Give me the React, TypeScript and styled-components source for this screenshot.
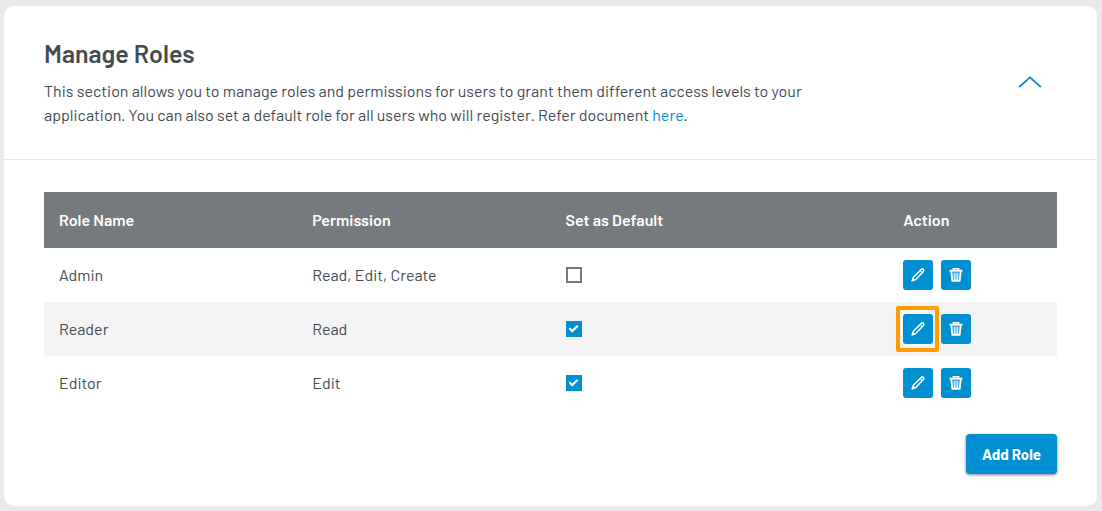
import React, { useState } from "react";
import styled, { createGlobalStyle } from "styled-components";

const GlobalStyle = createGlobalStyle`
  *, *::before, *::after { box-sizing: border-box; }
  body {
    margin: 0;
    background: #e7e9eb;
    color: #434b51;
    font-family: Barlow, Roboto, "Liberation Sans", sans-serif;
    font-size: 16px;
    line-height: 24px;
  }
`;

const Page = styled.main`
  padding: 6px 5px 5px 4px;
`;

const Card = styled.section`
  background: #fff;
  border-radius: 10px;
`;

const CardHeader = styled.header`
  display: flex;
  align-items: center;
  justify-content: space-between;
  gap: 24px;
  padding: 31px 55px 32px 40px;
  border-bottom: 1px solid #e7e9eb;
`;

const Intro = styled.div`
  max-width: 800px;
`;

const Title = styled.h2`
  margin: 0 0 10px;
  font-size: 25px;
  line-height: 32px;
  font-weight: 600;
`;

const Description = styled.p`
  margin: 0;
`;

const DocLink = styled.a`
  color: #008fd1;
  text-decoration: none;
`;

const CollapseButton = styled.button`
  display: flex;
  padding: 0;
  border: 0;
  background: none;
  color: #008fd1;
  cursor: pointer;
`;

const CardBody = styled.div`
  padding: 32px 40px;
`;

const RolesTable = styled.table`
  width: 100%;
  table-layout: fixed;
  border-collapse: collapse;
  text-align: left;
`;

const HeadCell = styled.th<{ $width: string }>`
  width: ${(p) => p.$width};
  height: 56px;
  padding: 0 15px;
  background: #757a7e;
  color: #fff;
  font-weight: 600;
`;

const Row = styled.tr`
  &:nth-child(even) { background: #f4f4f4; }
`;

const Cell = styled.td`
  height: 54px;
  padding: 0 15px;
`;

const Checkbox = styled.input`
  appearance: none;
  display: grid;
  place-items: center;
  width: 16px;
  height: 16px;
  margin: 0;
  border: 2px solid #757a7e;
  background: #fff;
  cursor: pointer;
  &:checked {
    border-color: #008fd1;
    background: #008fd1;
  }
  &:checked::before {
    content: "";
    width: 10px;
    height: 8px;
    background: #fff;
    clip-path: polygon(0 48%, 16% 30%, 37% 56%, 84% 0, 100% 18%, 37% 96%);
  }
`;

const Actions = styled.div`
  display: flex;
  gap: 8px;
`;

const IconButton = styled.button<{ $highlighted?: boolean }>`
  display: flex;
  align-items: center;
  justify-content: center;
  width: 30px;
  height: 30px;
  padding: 0;
  border: 0;
  border-radius: 3px;
  background: #008fd1;
  color: #fff;
  cursor: pointer;
  position: relative;
  &::after {
    content: "";
    display: ${(p) => (p.$highlighted ? "block" : "none")};
    position: absolute;
    inset: -8px -6px -8px -7px;
    border: 4px solid #ff9c00;
    border-radius: 2px;
    pointer-events: none;
  }
`;

const Footer = styled.div`
  display: flex;
  justify-content: flex-end;
  padding-top: 24px;
`;

const PrimaryButton = styled.button`
  height: 40px;
  padding: 0 16px;
  border: 0;
  border-radius: 4px;
  background: #008fd1;
  box-shadow: 0 1px 3px rgba(0, 0, 0, 0.5);
  color: #fff;
  font: inherit;
  font-size: 15px;
  font-weight: 700;
  white-space: nowrap;
  cursor: pointer;
`;

const ChevronIcon = ({ open }: { open: boolean }) => (
  <svg width="24" height="12" viewBox="0 0 24 12" fill="none" stroke="currentColor" strokeWidth="1.7" aria-hidden="true">
    <path d={open ? "M1.2 11 12 1.4 22.8 11" : "M1.2 1 12 10.6 22.8 1"} />
  </svg>
);

const PencilIcon = () => (
  <svg width="16" height="16" viewBox="0 0 16 16" fill="none" stroke="currentColor" strokeWidth="1.5" strokeLinejoin="round" aria-hidden="true">
    <path d="M2.2 13.8 3.4 10.3 11.3 2.4q1.1-1 2.1 0 1 1 0 2.2L5.7 12.5Z" />
    <path d="m10.3 3.6 2 2" strokeWidth="1.1" />
    <path d="M1.9 14.1 2.9 11 5 13.1Z" fill="currentColor" strokeWidth=".5" />
  </svg>
);

const TrashIcon = () => (
  <svg width="16" height="16" viewBox="0 0 16 16" fill="none" stroke="currentColor" aria-hidden="true">
    <path d="M1.5 3.7h13" strokeWidth="1.9" />
    <path d="M5.3 3.2V1.8h5.4v1.4" strokeWidth="1.4" />
    <path d="M3.3 4.5 4.4 13.8h7.2l1.1-9.3" strokeWidth="1.9" strokeLinejoin="round" />
    <path d="m6.1 5.5.3 7.5M8 5.5V13M9.9 5.5 9.6 13" strokeWidth="1.1" />
  </svg>
);

interface Role {
  name: string;
  permission: string;
  isDefault: boolean;
  highlighted?: boolean;
}

const initialRoles: Role[] = [
  { name: "Admin", permission: "Read, Edit, Create", isDefault: false },
  { name: "Reader", permission: "Read", isDefault: true, highlighted: true },
  { name: "Editor", permission: "Edit", isDefault: true },
];

export default function App() {
  const [roles, setRoles] = useState(initialRoles);
  const [open, setOpen] = useState(true);

  const toggleDefault = (name: string) =>
    setRoles((list) => list.map((r) => (r.name === name ? { ...r, isDefault: !r.isDefault } : r)));

  return (
    <>
      <GlobalStyle />
      <Page>
        <Card>
          <CardHeader>
            <Intro>
              <Title>Manage Roles</Title>
              <Description>
                This section allows you to manage roles and permissions for users to grant them different access
                levels to your application. You can also set a default role for all users who will register. Refer
                document <DocLink href="#roles">here</DocLink>.
              </Description>
            </Intro>
            <CollapseButton aria-label="Toggle section" aria-expanded={open} onClick={() => setOpen(!open)}>
              <ChevronIcon open={open} />
            </CollapseButton>
          </CardHeader>
          {open && (
            <CardBody>
              <RolesTable>
                <thead>
                  <tr>
                    <HeadCell $width="25%">Role Name</HeadCell>
                    <HeadCell $width="25%">Permission</HeadCell>
                    <HeadCell $width="calc(100% / 3)">Set as Default</HeadCell>
                    <HeadCell $width="calc(100% / 6)">Action</HeadCell>
                  </tr>
                </thead>
                <tbody>
                  {roles.map((role) => (
                    <Row key={role.name}>
                      <Cell>{role.name}</Cell>
                      <Cell>{role.permission}</Cell>
                      <Cell>
                        <Checkbox
                          type="checkbox"
                          aria-label={`Set ${role.name} as default`}
                          checked={role.isDefault}
                          onChange={() => toggleDefault(role.name)}
                        />
                      </Cell>
                      <Cell>
                        <Actions>
                          <IconButton $highlighted={role.highlighted} aria-label={`Edit ${role.name}`}>
                            <PencilIcon />
                          </IconButton>
                          <IconButton aria-label={`Delete ${role.name}`}>
                            <TrashIcon />
                          </IconButton>
                        </Actions>
                      </Cell>
                    </Row>
                  ))}
                </tbody>
              </RolesTable>
              <Footer>
                <PrimaryButton>Add Role</PrimaryButton>
              </Footer>
            </CardBody>
          )}
        </Card>
      </Page>
    </>
  );
}
